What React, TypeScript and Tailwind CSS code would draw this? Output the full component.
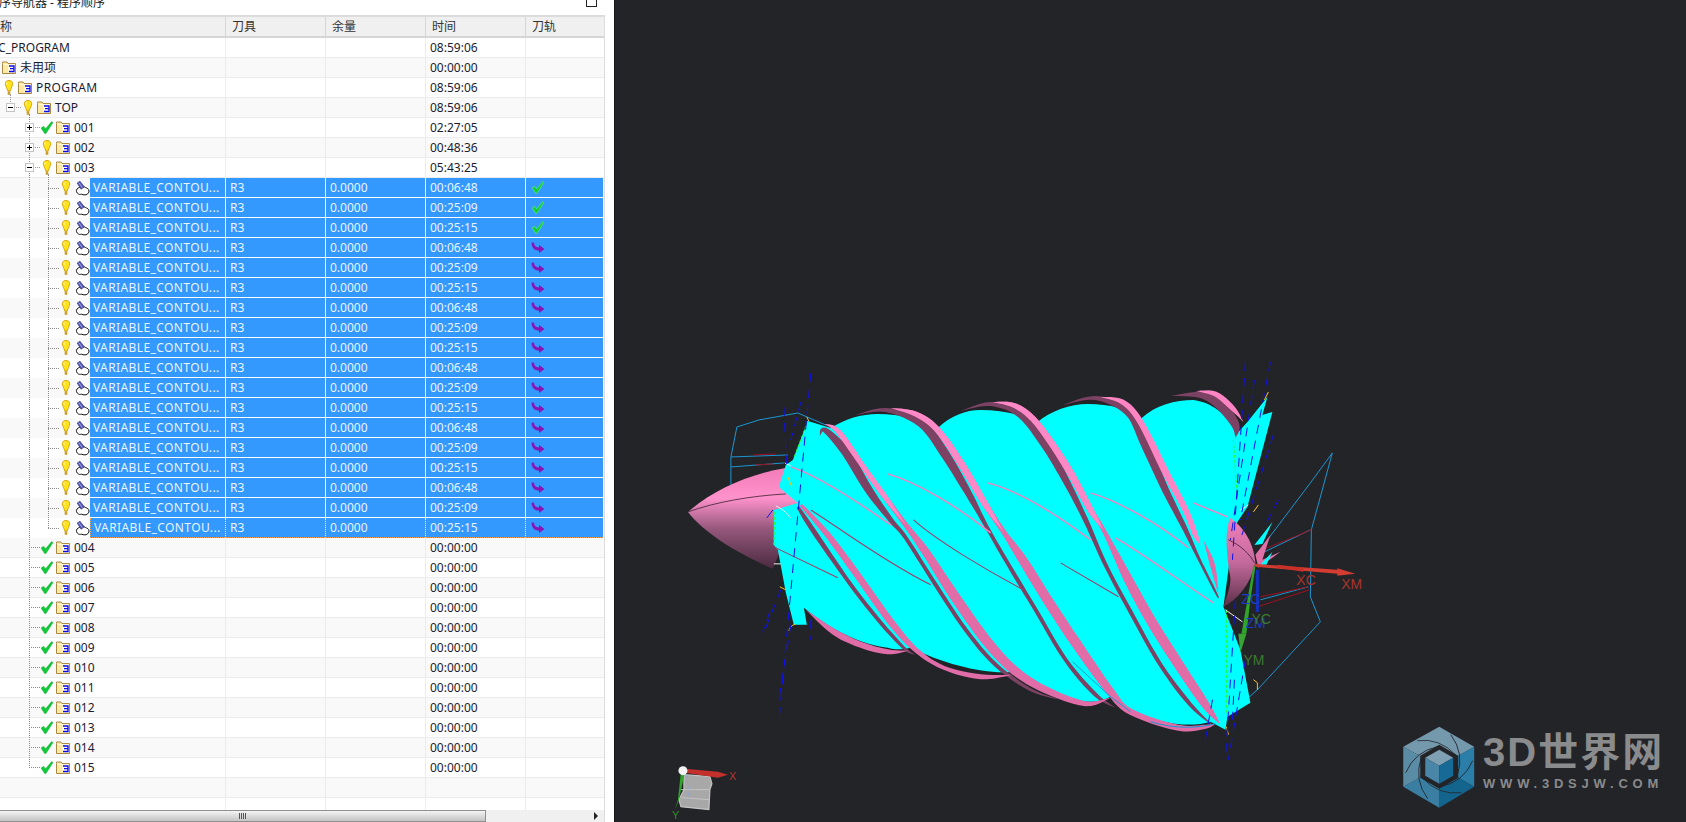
import React from 'react';

const FONT = { fontFamily: '"Noto Sans", "Noto Sans CJK SC", sans-serif' };

const Bulb = () => (
  <svg width="14" height="16" viewBox="0 0 14 16" className="shrink-0">
    <path d="M7 .5C9.6.5 10.7 2 10.7 3.8 10.7 6.2 8.6 8.2 8.4 10.8H5.6C5.4 8.2 3.3 6.2 3.3 3.8 3.3 2 4.4.5 7 .5Z" fill="#ffe31c" stroke="#d49f00" strokeWidth=".9" />
    <path d="M5.4 2.2C4.8 3 4.8 4 5.2 5" stroke="#fff8c0" strokeWidth="1" fill="none" />
    <rect x="5.7" y="11.2" width="2.6" height="3.6" fill="#c8a02a" />
  </svg>
);

const Check = ({ light = false }: { light?: boolean }) => (
  <svg width="14" height="13" viewBox="0 0 14 13" className="shrink-0">
    <path
      d="M1 7 3.6 5.2 5.6 7.8 11.6.6 13 1.6 6 12.4H4.6Z"
      fill={light ? '#10d038' : '#12c93a'}
      stroke={light ? '#a8f0bc' : '#0ea52e'}
      strokeWidth=".4"
    />
  </svg>
);

const Folder = () => (
  <svg width="14" height="13" viewBox="0 0 14 13" className="shrink-0">
    <path d="M.5 2.5V1h4.5l1 1.5h7.5v10H.5Z" fill="#ffe9a4" stroke="#a88a44" />
    <path d="M1.5 3.5h11" stroke="#fff8dc" />
    <rect x="6.5" y="4" width="6" height="7.5" fill="#fffdf2" />
    <path d="M7 5h5v2.7H8M8 7.7h4v2.8H7" fill="none" stroke="#0808e8" strokeWidth="1.3" />
  </svg>
);

const OpIcon = () => (
  <svg width="15" height="15" viewBox="0 0 15 15" className="shrink-0">
    <path d="M2 8C.8 9.5 1.5 12 3.5 13 5.2 14 6 12.6 8 13.6 10.5 14.6 14 13 14 10 14 7.8 12 7.2 10.5 6.5 9 5.8 8 4.5 6 5.5 4.5 6.3 3 6.8 2 8Z" fill="#fff" stroke="#111" strokeWidth="1" />
    <path d="M2.2 2 5 .2 9.4 6 6 8.2Z" fill="#5257b8" stroke="#2b2d70" strokeWidth=".6" />
    <path d="M3.8 1.6 7.2 6.6" stroke="#a9aee8" strokeWidth=".9" />
  </svg>
);

const PathArrow = () => (
  <svg width="14" height="12" viewBox="0 0 14 12" className="shrink-0">
    <path d="M.5.8 3 .6C3.2 3.5 4.5 5.5 8 5.5V3L13.5 7 8 11V8.6C3.5 8.6.8 6 .5.8Z" fill="#8a14b4" />
  </svg>
);

// spacers for the tree depth, full class names only
const indent: Record<number, string> = {
  0: 'w-[2px]',
  1: 'w-[2px]',
  2: 'w-[21px]',
  3: 'w-[40px]',
};

const Slot = ({ box, dotted, sign }: { box?: boolean; dotted?: boolean; sign?: string }) => (
  <div className="relative flex h-full w-[19px] shrink-0 items-center">
    {box && (
      <div className="relative z-10 ml-[4px] flex h-[9px] w-[9px] items-center justify-center border border-[#c4c4c4] bg-white">
        <div className="h-px w-[5px] bg-black" />
        {sign === '+' && <div className="absolute h-[5px] w-px bg-black" />}
      </div>
    )}
    {box && <div className="ml-px w-[5px] border-t border-dotted border-[#9a9a9a]" />}
    {dotted && <div className="ml-[8px] w-[11px] border-t border-dotted border-[#8a8a8a]" />}
  </div>
);

type RowData = {
  kind: 'root' | 'unused' | 'group' | 'op' | 'blank';
  depth?: number;
  label?: string;
  status?: 'bulb' | 'check';
  sign?: string;
  time?: string;
  path?: 'check' | 'arrow';
  last?: boolean;
};

const rows: RowData[] = [
  { kind: 'root', label: 'NC_PROGRAM', time: '08:59:06' },
  { kind: 'unused', label: '未用项', time: '00:00:00' },
  { kind: 'group', depth: 1, label: 'PROGRAM', status: 'bulb', time: '08:59:06' },
  { kind: 'group', depth: 1, label: 'TOP', status: 'bulb', sign: '-', time: '08:59:06' },
  { kind: 'group', depth: 2, label: '001', status: 'check', sign: '+', time: '02:27:05' },
  { kind: 'group', depth: 2, label: '002', status: 'bulb', sign: '+', time: '00:48:36' },
  { kind: 'group', depth: 2, label: '003', status: 'bulb', sign: '-', time: '05:43:25' },
];

const opTimes = ['00:06:48', '00:25:09', '00:25:15'];
for (let i = 0; i < 18; i++) {
  rows.push({
    kind: 'op',
    label: 'VARIABLE_CONTOU...',
    time: opTimes[i % 3],
    path: i < 3 ? 'check' : 'arrow',
    last: i === 17,
  });
}
for (let i = 4; i <= 15; i++) {
  rows.push({ kind: 'group', depth: 2, label: String(i).padStart(3, '0'), status: 'check', time: '00:00:00' });
}
rows.push({ kind: 'blank' }, { kind: 'blank' });

const NameCell = ({ row }: { row: RowData }) => {
  if (row.kind === 'root') {
    return (
      <div className="-ml-[11px] flex h-full items-center">
        <span>{row.label}</span>
      </div>
    );
  }
  if (row.kind === 'unused') {
    return (
      <div className="flex h-full items-center pl-[2px]">
        <Folder />
        <span className="ml-[4px]">{row.label}</span>
      </div>
    );
  }
  if (row.kind === 'group') {
    const d = row.depth ?? 1;
    const isProgram = row.label === 'PROGRAM';
    return (
      <div className="flex h-full items-center">
        <div className={`${indent[isProgram ? 1 : d]} shrink-0`} />
        {!isProgram && <Slot box={!!row.sign} dotted={!row.sign} sign={row.sign} />}
        <div className="flex w-[14px] shrink-0 justify-center">{row.status === 'check' ? <Check /> : <Bulb />}</div>
        <div className="ml-[2px]">
          <Folder />
        </div>
        <span className={`ml-[4px] ${isProgram ? 'tracking-[0.4px]' : ''}`}>{row.label}</span>
      </div>
    );
  }
  if (row.kind === 'op') {
    return (
      <div className="flex h-full items-center">
        <div className="w-[40px] shrink-0" />
        <Slot dotted />
        <div className="flex w-[14px] shrink-0 justify-center">
          <Bulb />
        </div>
        <div className="ml-[2px]">
          <OpIcon />
        </div>
        <div
          className={`flex h-full flex-1 items-center overflow-hidden whitespace-nowrap bg-[#3399ff] pl-[3px] tracking-[0.4px] text-[#eaf4ff] ${
            row.last ? 'border-b border-l border-dotted border-[#f0a050]' : 'border-b border-white'
          }`}
        >
          {row.label}
        </div>
      </div>
    );
  }
  return null;
};

const TableRow = ({ row, index }: { row: RowData; index: number }) => {
  const sel = row.kind === 'op';
  const stripe = index % 2 === 1 ? 'bg-[#f9f9f9]' : 'bg-white';
  const cell = sel
    ? `h-full border-l border-white bg-[#3399ff] pl-[4px] text-[#eaf4ff] ${row.last ? 'border-b border-dotted border-b-[#f0a050]' : 'border-b border-white'}`
    : 'h-full border-l border-[#ececec] pl-[4px]';
  return (
    <div className={`grid h-[20px] shrink-0 grid-cols-[225px_100px_100px_100px_78px] leading-[19px] ${stripe} ${sel ? '' : 'border-b border-[#ececec]'}`}>
      <div className="h-full min-w-0">
        <NameCell row={row} />
      </div>
      <div className={cell}>{sel ? 'R3' : ''}</div>
      <div className={cell}>{sel ? '0.0000' : ''}</div>
      <div className={cell}>{row.time}</div>
      <div className={`${cell} flex items-center pl-[5px]`}>
        {row.path === 'check' && <Check light />}
        {row.path === 'arrow' && <PathArrow />}
      </div>
    </div>
  );
};

const Navigator = () => (
  <div className="flex h-full w-[614px] shrink-0 flex-col overflow-hidden bg-white text-[12px] text-[#1c1c30]" style={FONT}>
    <div className="flex h-[15px] shrink-0 items-start justify-between overflow-hidden pr-[17px]">
      <div className="-ml-[13px] -mt-[7px] whitespace-pre leading-[20px] text-[#222]">工序导航器 - 程序顺序</div>
      <div className="-mt-[4px] h-[11px] w-[11px] border border-[#222] bg-white" />
    </div>
    <div className="flex min-h-0 w-[605px] flex-1 flex-col overflow-hidden border-r border-t-2 border-[#dcdcdc]">
      <div className="grid h-[21px] shrink-0 grid-cols-[225px_100px_100px_100px_78px] border-b-2 border-[#d6d6d6] bg-[#f0f0f0] leading-[19px] text-[#333]">
        <div className="-ml-[12px] pl-0">名称</div>
        <div className="border-l border-[#d6d6d6] pl-[6px]">刀具</div>
        <div className="border-l border-[#d6d6d6] pl-[6px]">余量</div>
        <div className="border-l border-[#d6d6d6] pl-[6px]">时间</div>
        <div className="border-l border-[#d6d6d6] pl-[6px]">刀轨</div>
      </div>
      <div className="relative min-h-0 flex-1 overflow-hidden">
        {rows.map((r, i) => (
          <TableRow key={i} row={r} index={i} />
        ))}
        {/* tree guide lines */}
        <div className="absolute left-[10px] top-[56px] h-[14px] border-l border-dotted border-[#9a9a9a]" />
        <div className="absolute left-[29px] top-[76px] h-[654px] border-l border-dotted border-[#8a8a8a]" />
        <div className="absolute left-[48px] top-[136px] h-[354px] border-l border-dotted border-[#8a8a8a]" />
        {/* horizontal scrollbar lies over the last blank row */}
        <div className="absolute bottom-0 left-0 right-0 flex h-[12px] items-center bg-[#f0f0f0]">
          <div className="flex h-full w-[486px] items-center justify-center border border-l-0 border-[#8f8f8f] bg-gradient-to-b from-[#f4f4f4] to-[#c4c4c4]">
            <div className="flex gap-px">
              <div className="h-[6px] w-px bg-[#555]" />
              <div className="h-[6px] w-px bg-[#555]" />
              <div className="h-[6px] w-px bg-[#555]" />
              <div className="h-[6px] w-px bg-[#555]" />
            </div>
          </div>
          <div className="ml-auto mr-[6px] h-0 w-0 border-y-[4px] border-l-[4px] border-y-transparent border-l-[#222]" />
        </div>
      </div>
    </div>
  </div>
);

// variable width ribbon through [x, y, width] points, used for the flute bands
function ribbon(pts: number[][]): string {
  const s: number[][] = [];
  for (let i = 0; i < pts.length - 1; i++) {
    const p0 = pts[Math.max(i - 1, 0)];
    const p1 = pts[i];
    const p2 = pts[i + 1];
    const p3 = pts[Math.min(i + 2, pts.length - 1)];
    for (let k = 0; k < 6; k++) {
      const t = k / 6;
      s.push(
        [0, 1, 2].map(
          (c) =>
            0.5 *
            (2 * p1[c] +
              (p2[c] - p0[c]) * t +
              (2 * p0[c] - 5 * p1[c] + 4 * p2[c] - p3[c]) * t * t +
              (3 * p1[c] - p0[c] - 3 * p2[c] + p3[c]) * t * t * t),
        ),
      );
    }
  }
  s.push(pts[pts.length - 1]);
  const a: string[] = [];
  const b: string[] = [];
  s.forEach((p, i) => {
    const q = s[Math.min(i + 1, s.length - 1)];
    const o = s[Math.max(i - 1, 0)];
    const dx = q[0] - o[0];
    const dy = q[1] - o[1];
    const l = Math.hypot(dx, dy) || 1;
    const w = Math.max(p[2], 0) / 2;
    a.push(`${(p[0] - (dy / l) * w).toFixed(1)} ${(p[1] + (dx / l) * w).toFixed(1)}`);
    b.unshift(`${(p[0] + (dy / l) * w).toFixed(1)} ${(p[1] - (dx / l) * w).toFixed(1)}`);
  });
  return `M${a.join('L')}L${b.join('L')}Z`;
}

const darkBands = [
  [[819, 436, 0], [824, 430, 5], [845, 452, 9], [868, 490, 8], [890, 520, 5], [905, 538, 4], [935, 585, 4], [965, 630, 4], [995, 665, 4], [1030, 690, 3], [1060, 700, 0]],
  [[855, 415, 0], [885, 410, 4], [920, 423, 8], [943, 452, 9], [967, 492, 7], [985, 525, 4], [1005, 560, 4], [1035, 610, 4], [1065, 660, 4], [1095, 695, 4], [1115, 708, 0]],
  [[960, 411, 0], [990, 404, 4], [1020, 414, 8], [1045, 445, 9], [1065, 480, 7], [1085, 520, 5], [1105, 565, 4], [1130, 612, 4], [1160, 665, 4], [1190, 705, 4], [1215, 728, 0]],
  [[1062, 405, 0], [1095, 398, 4], [1128, 412, 8], [1145, 445, 9], [1165, 490, 7], [1185, 530, 5], [1198, 558, 3], [1216, 594, 2], [1218, 598, 0]],
  [[1170, 396, 0], [1200, 395, 6], [1220, 405, 10], [1235, 425, 8], [1235, 438, 0]],
  [[797, 507, 3], [812, 530, 5], [845, 578, 4], [875, 617, 4], [903, 648, 3], [915, 655, 0]],
];

const pinkBands = [
  [[824, 424, 0], [838, 432, 5], [862, 466, 5], [885, 498, 5], [905, 525, 5], [925, 552, 8], [953, 595, 10], [985, 640, 10], [1013, 670, 9], [1045, 690, 7], [1085, 704, 5], [1110, 698, 0]],
  [[890, 408, 0], [915, 414, 5], [937, 430, 6], [962, 466, 7], [985, 505, 6], [1003, 532, 5], [1022, 560, 9], [1050, 605, 10], [1080, 650, 10], [1110, 692, 8], [1130, 712, 6], [1177, 728, 6], [1205, 727, 4], [1215, 724, 0]],
  [[992, 402, 0], [1015, 406, 5], [1037, 424, 6], [1067, 468, 7], [1090, 510, 6], [1103, 530, 4], [1127, 578, 9], [1150, 620, 10], [1177, 663, 10], [1205, 705, 8], [1220, 725, 0]],
  [[1100, 397, 0], [1122, 402, 5], [1140, 422, 6], [1165, 472, 7], [1185, 510, 6], [1195, 535, 5], [1200, 545, 0]],
  [[1203, 540, 0], [1212, 565, 5], [1218, 595, 0]],
  [[1195, 391, 0], [1215, 394, 5], [1232, 408, 5], [1243, 422, 0]],
  [[800, 505, 3], [827, 535, 6], [860, 580, 7], [890, 622, 7], [915, 650, 5], [943, 668, 4], [980, 677, 5], [1013, 675, 0]],
  [[805, 610, 0], [833, 632, 6], [860, 645, 6], [887, 652, 5], [908, 651, 0]],
];

const Screw = () => (
  <svg viewBox="614 0 1072 822" className="block h-full w-full">
    <defs>
      <linearGradient id="nose" x1="0" y1="0" x2="0" y2="1">
        <stop offset="0" stopColor="#f27cb8" />
        <stop offset=".3" stopColor="#ff92cc" />
        <stop offset=".6" stopColor="#96587c" />
        <stop offset="1" stopColor="#4a2a40" />
      </linearGradient>
      <linearGradient id="bullet" x1="0" y1="0" x2="0" y2="1">
        <stop offset="0" stopColor="#f080b8" />
        <stop offset=".5" stopColor="#c46a9c" />
        <stop offset="1" stopColor="#5a3048" />
      </linearGradient>
    </defs>

    {/* wire frames behind */}
    <g fill="none" stroke="#1a96d2" strokeWidth="1">
      <path d="M730 486V457L736 427 758 420 797 413 825 425" />
      <path d="M730 457 787 455M730 467 783 463" />
      <path d="M1332 453 1310 483 1267 540M1332 453 1311 530 1310 597 1320 622 1257 690 1248 698M1310 530 1262 553M1308 587 1260 600" />
    </g>
    <g fill="none" stroke="#a01020" strokeWidth="1">
      <path d="M752 455 775 454M755 465 772 464M1311 530 1262 550M1308 587 1260 597M1309 590 1257 607" />
    </g>

    {/* nose */}
    <path d="M687 512C715 488 750 474 785 468L800 500 772 569C740 555 705 535 687 512Z" fill="url(#nose)" />
    <path d="M687 512C715 502 750 496 785 494" stroke="#3a2030" fill="none" strokeWidth=".8" />

    {/* cyan body */}
    <path
      d="M807 421 830 428C845 419 860 414 877 414 900 414 920 419 937 428 950 416 965 410 980 410 1000 410 1020 414 1037 422 1050 411 1070 404 1087 404 1110 404 1128 409 1140 419 1155 405 1175 400 1193 400 1215 403 1228 418 1237 433L1247 422 1267 397 1262 415 1272 412 1247 507 1235 525 1228 570 1223 607 1240 650 1250 703 1227 717 1225 730 1210 722C1190 728 1160 725 1127 710L1110 697C1100 702 1090 703 1080 701 1050 692 1030 685 1013 672 985 675 945 665 910 648 900 650 895 650 887 648 860 645 830 630 803 608L806 625H793L785 593 777 550 773 545 773 510 797 503 778 487 785 465 792 460Z"
      fill="#00ffff"
    />

    {/* flute bands */}
    {darkBands.map((b, i) => (
      <path key={i} d={ribbon(b)} fill="#7c4263" />
    ))}
    {pinkBands.map((b, i) => (
      <path key={i} d={ribbon(b)} fill={i === 3 || i === 5 ? '#ff84c4' : '#e06ca8'} />
    ))}
    {/* the upper stretches of the bands are lighter */}
    <g fill="#ff88c6">
      <path d={ribbon([[824, 424, 0], [838, 432, 5], [862, 466, 5], [885, 498, 5], [905, 525, 0]])} />
      <path d={ribbon([[890, 408, 0], [915, 414, 5], [937, 430, 6], [962, 466, 7], [985, 505, 6], [1003, 532, 0]])} />
      <path d={ribbon([[992, 402, 0], [1015, 406, 5], [1037, 424, 6], [1067, 468, 7], [1090, 510, 6], [1103, 530, 0]])} />
    </g>

    {/* thin pink and dark red seams on the cyan */}
    <g fill="none" strokeWidth="1.4">
      <path d="M790 467C815 475 850 497 890 525M887 474C915 482 955 505 990 533M987 483C1015 490 1050 510 1090 540M1090 493C1120 502 1160 525 1188 548M1115 538C1140 552 1185 585 1213 603M1193 503 1227 517" stroke="#ff7cbc" />
      <path d="M775 548 837 578M810 510C830 522 880 560 930 585M913 520C935 540 985 570 1023 590M1060 563 1118 597" stroke="#a83a68" strokeWidth="1.1" />
      <path d="M1150 722C1175 730 1200 728 1215 724M1072 662 1110 697 1130 712" stroke="#1a96d2" strokeWidth="1" />
    </g>

    {/* end bullet */}
    <path d="M1230 518C1247 530 1254 548 1255 563 1250 585 1237 600 1223 607 1228 592 1232 582 1229 573 1226 550 1224 530 1230 518Z" fill="url(#bullet)" />
    <path d="M1228 540C1240 545 1250 555 1254 563" stroke="#3a2030" fill="none" strokeWidth=".8" />
    <path d="M1255 555 1270 535 1262 560 1280 552 1258 568Z" fill="#e070a8" />
    <path d="M1254 545 1272 522 1262 544ZM1260 565 1272 552 1266 565Z" fill="#00ffff" />

    {/* fin edges: green, white, orange curves */}
    <g fill="none" strokeWidth="1">
      <path d="M807 421 793 458M773 545 774 510M1233 440 1237 500M1226 610 1226 715" stroke="#20ff30" strokeDasharray="3 2" />
      <path d="M775 506C780 508 785 512 790 518M784 463 790 466M773 564H780M1225 610 1242 622M1240 510 1248 505" stroke="#f0f0f0" />
      <path d="M806 417 808 421M787 477 791 487M779 587 785 590M795 624C790 626 789 628 788 631M1268 392 1264 400M1253 512 1258 505M1253 680 1257 683 1257 690M1226 727 1228 735" stroke="#ffc21a" />
    </g>

    {/* blue dashed tool axes */}
    <g fill="none" stroke="#1010f0" strokeWidth="1" strokeDasharray="9 7">
      <path d="M810 373 778 722" />
      <path d="M783 407 786 470M800 402 790 440M769 612 762 632M780 590 762 635M790 625 778 700M810 620V640" />
      <path d="M1245 362 1232 560M1270 362 1240 520M1254 380 1230 540M1273 435 1240 540M1278 500 1265 525" />
      <path d="M1235 600 1225 760M1245 660 1228 760M1212 700 1204 745M1234 680 1232 720" />
    </g>
    <path d="M766 518 772 510" stroke="#1010f0" strokeWidth="1" />

    {/* work coordinate axes */}
    <path d="M1254 564 1337 570V568.500L1355 574 1337 576V574L1255 567Z" fill="#d23c32" />
    <path d="M1277 565 1303 568 1303 572 1277 568Z" fill="#c83028" />
    <path d="M1257 570V612" stroke="#1030c0" strokeWidth="3" />
    <path d="M1253 566 1247 600 1241 634 1246 634 1250 600 1255 567Z" fill="#2fa32a" />
    <path d="M1240 653 1238 634 1246 634Z" fill="#3aa534" />
    <g fontFamily="'Liberation Sans', sans-serif" fontSize="14">
      <text x="1296" y="585" fill="#a8352c">XC</text>
      <text x="1341" y="589" fill="#a8352c">XM</text>
      <text x="1241" y="604" fill="#1c3cc8">ZC</text>
      <text x="1245" y="628" fill="#1c3cc8">ZM</text>
      <text x="1251" y="624" fill="#3c7a30">YC</text>
      <text x="1243" y="665" fill="#3c7a30">YM</text>
    </g>

    {/* small view triad */}
    <path d="M683 775 709 777 711 784 709 790 708 810 680 807 678 800 683 790Z" fill="#a8a8a8" stroke="#c4c4c4" strokeWidth="1.2" />
    <path d="M680 790 708 790M681 798 708 800" stroke="#c4c4c4" />
    <path d="M686 775 688 800" stroke="#8fa6d8" strokeDasharray="3 3" />
    <path d="M684 769 717 772 727 775 717 778 684 773Z" fill="#c4302c" />
    <path d="M680 772 677 800 674 810 678 800 684 772Z" fill="#2fa32a" />
    <circle cx="682" cy="771" r="4.500" fill="#f4f4f4" />
    <g fontFamily="'Liberation Sans', sans-serif" fontSize="11">
      <text x="728" y="780" fill="#b8352c">X</text>
      <text x="671" y="819" fill="#2f8a2a">Y</text>
    </g>

    {/* logo */}
    <path d="M1439 767 1403 747 1439 727 1474 747Z" fill="#7499ac" />
    <path d="M1439 767 1474 747V787Z" fill="#2a7ea8" />
    <path d="M1439 767 1474 787 1439 808Z" fill="#14658e" />
    <path d="M1439 767 1439 808 1403 787Z" fill="#3a7ea2" />
    <path d="M1439 767 1403 787V747Z" fill="#5a8ca6" />
    {[0, 60, 120, 180, 240, 300].map((a) => (
      <path key={a} d="M1417 741Q1440 738 1456 756" stroke="#232428" strokeWidth=".8" fill="none" transform={`rotate(${a} 1439 767)`} />
    ))}
    <path d="M1439 745 1458 756V778L1439 789 1420 778V756Z" fill="#232428" />
    <path d="M1439 750 1453 758 1439 766 1425 758Z" fill="#7fa0b2" />
    <path d="M1425 758 1439 766V784L1425 776Z" fill="#4a86a8" />
    <path d="M1453 758 1439 766V784L1453 776Z" fill="#186a96" />
  </svg>
);

const Viewport = () => (
  <div className="relative h-full flex-1 overflow-hidden border-l border-[#17181a] bg-[#232428]">
    <Screw />
    <div className="absolute left-[868px] top-[728px] text-[#8a8b8d]">
      <div className="text-[40px] font-bold leading-[48px] tracking-[2px]" style={{ fontFamily: '"Liberation Sans", "Noto Sans CJK SC", sans-serif' }}>
        3D世界网
      </div>
      <div className="mt-[1px] text-[13px] font-bold leading-[14px] tracking-[4.8px]" style={{ fontFamily: '"Liberation Sans", sans-serif' }}>
        WWW.3DSJW.COM
      </div>
    </div>
  </div>
);

export default function App() {
  return (
    <div className="flex h-[822px] w-[1686px] overflow-hidden">
      <Navigator />
      <Viewport />
    </div>
  );
}
